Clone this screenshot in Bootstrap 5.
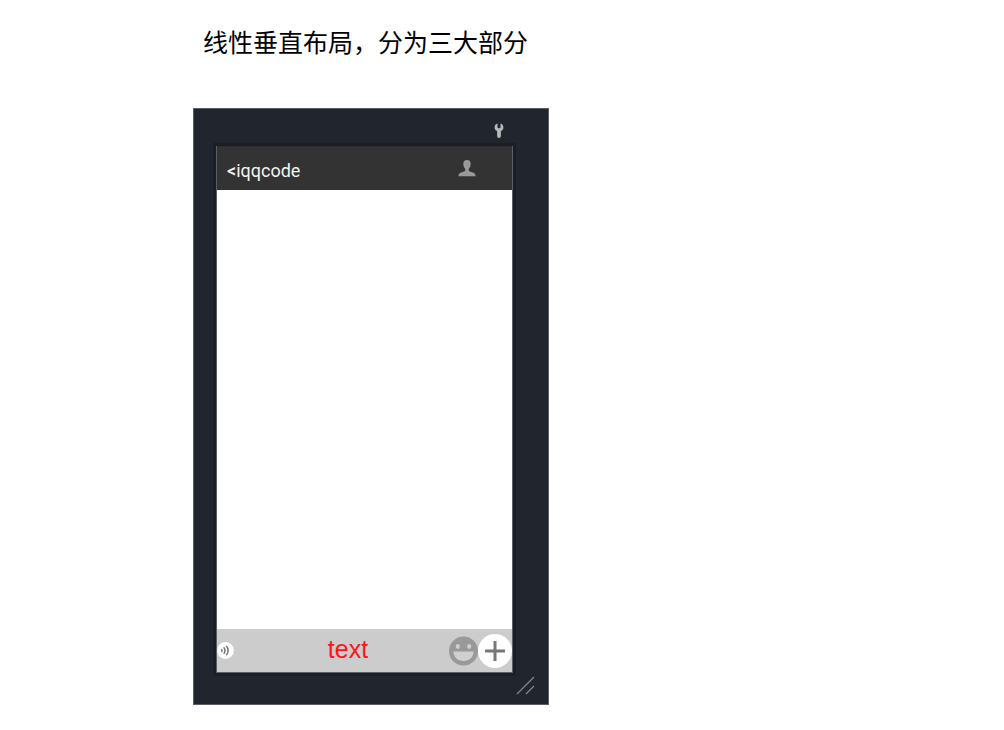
<!DOCTYPE html>
<html lang="zh-CN">
<head>
<meta charset="utf-8">
<meta name="viewport" content="width=device-width, initial-scale=1">
<title>线性垂直布局</title>
<link href="https://cdn.jsdelivr.net/npm/bootstrap@5.3.0/dist/css/bootstrap.min.css" rel="stylesheet">
<style>
  body { background: #fff; color: #000; font-family: "Liberation Sans", "Noto Sans CJK SC", sans-serif; }
  .page-grid { display: grid; grid-template-columns: 193fr minmax(356px, 356fr) 455fr; grid-template-rows: auto 1fr; padding: 24px 0 25px; row-gap: 50px; }
  .page-grid > * { grid-column: 2; }
  .page-title { font: 400 25px/34px "Noto Sans CJK SC", sans-serif; padding-left: 10px; white-space: nowrap; }
  .device { background: #21252d; border: 1px solid #5a5d63; padding: 0 35px 0 22px; }
  .device-top { height: 37px; padding: 14px 9px 0 0; }
  .screen { background: #fff; outline: 3px solid #1b1f24; border: solid #596067; border-width: 0 1px 1px; }
  .chat-bar { background: #333; height: 44px; padding: 0 36px 0 10px; border-top: 1px solid #2b2d2f; }
  .back-link { color: #f2f2f2; font: 18px/24px Roboto, sans-serif; }
  .back-link span { font-weight: 500; }
  .compose { background: #ccc; height: 43px; }
  .compose input { color: #ff1515; font: 25px/30px "Liberation Sans", sans-serif; min-width: 0; outline: 0; padding: 0 0 3px 14px; }
  .device-bottom { height: 31px; padding: 3px 0 0; margin-right: -22px; }
  svg { display: block; }
</style>
<script src="https://cdn.jsdelivr.net/npm/bootstrap@5.3.0/dist/js/bootstrap.bundle.min.js"></script>
</head>
<body>
<main class="page-grid min-vh-100">
  <h1 class="page-title m-0">线性垂直布局，分为三大部分</h1>
  <section class="device d-flex flex-column">
    <div class="device-top d-flex justify-content-end align-items-start">
      <button type="button" class="border-0 bg-transparent p-0" aria-label="设置">
        <svg width="10" height="16" viewBox="0 0 10 16"><path d="M3.500.6C1.500 1.200.6 2.600.6 4.400c0 1.700.9 3 2.500 3.700V13a1.900 1.900 0 0 0 3.800 0V8.100C8.500 7.400 9.400 6.100 9.400 4.400 9.400 2.600 8.500 1.200 6.500.6v4l-.8.7H4.300l-.8-.7z" fill="#b5b7ba"/></svg>
      </button>
    </div>
    <div class="screen flex-grow-1 d-flex flex-column">
      <header class="chat-bar d-flex align-items-center justify-content-between">
        <a href="#" class="back-link text-decoration-none pt-1"><span>&lt;</span>iqqcode</a>
        <button type="button" class="border-0 bg-transparent p-0" aria-label="联系人">
          <svg width="18" height="20" viewBox="0 0 18 20"><path d="M9 1C6.500 1 5.300 2.500 5.300 4.700c0 2.300.7 4 1.900 5v1.500c0 .7-.4 1-1.200 1.300l-3.500 1.300C1.100 14.400.5 15.400.5 17.200h17c0-1.800-.6-2.800-2-3.400L12 12.500c-.8-.3-1.200-.6-1.200-1.300V9.700c1.200-1 1.900-2.700 1.900-5C12.700 2.500 11.500 1 9 1z" fill="#999"/></svg>
        </button>
      </header>
      <div class="flex-grow-1"></div>
      <form class="compose d-flex align-items-center">
        <button type="button" class="border-0 bg-transparent p-0" aria-label="语音">
          <svg width="17" height="17" viewBox="0 0 17 17"><circle cx="8.500" cy="8.500" r="8.400" fill="#fff"/><g fill="none" stroke="#777" stroke-width="1.500"><path d="M4.500 7q1 1.500 0 3M6.700 5.200q2.600 3.300 0 6.600M9.200 3.800q4 4.700 0 9.400"/></g></svg>
        </button>
        <input type="text" class="flex-grow-1 border-0 bg-transparent text-center" value="text" aria-label="消息">
        <button type="button" class="border-0 bg-transparent p-0" aria-label="表情">
          <svg width="30" height="30" viewBox="0 0 30 30"><circle cx="15.500" cy="15" r="14.500" fill="#999"/><g fill="#d0d0d0"><ellipse cx="9.800" cy="10.500" rx="2" ry="2.400"/><ellipse cx="21.200" cy="10.500" rx="2" ry="2.400"/><path d="M5.500 15.500h20c0 5.500-4 9.500-10 9.500s-10-4-10-9.500z"/></g></svg>
        </button>
        <button type="button" class="border-0 bg-transparent p-0" aria-label="添加">
          <svg width="34" height="36" viewBox="0 0 34 36"><circle cx="17" cy="18" r="17" fill="#fff"/><path d="M17 8v20M7 18h20" stroke="#777" stroke-width="3"/></svg>
        </button>
      </form>
    </div>
    <div class="device-bottom d-flex justify-content-end">
      <svg width="20" height="20" viewBox="0 0 20 20"><path d="M2 18 19 1M11 18l8-8" fill="none" stroke="#85878b" stroke-width="1.200"/></svg>
    </div>
  </section>
</main>
</body>
</html>
